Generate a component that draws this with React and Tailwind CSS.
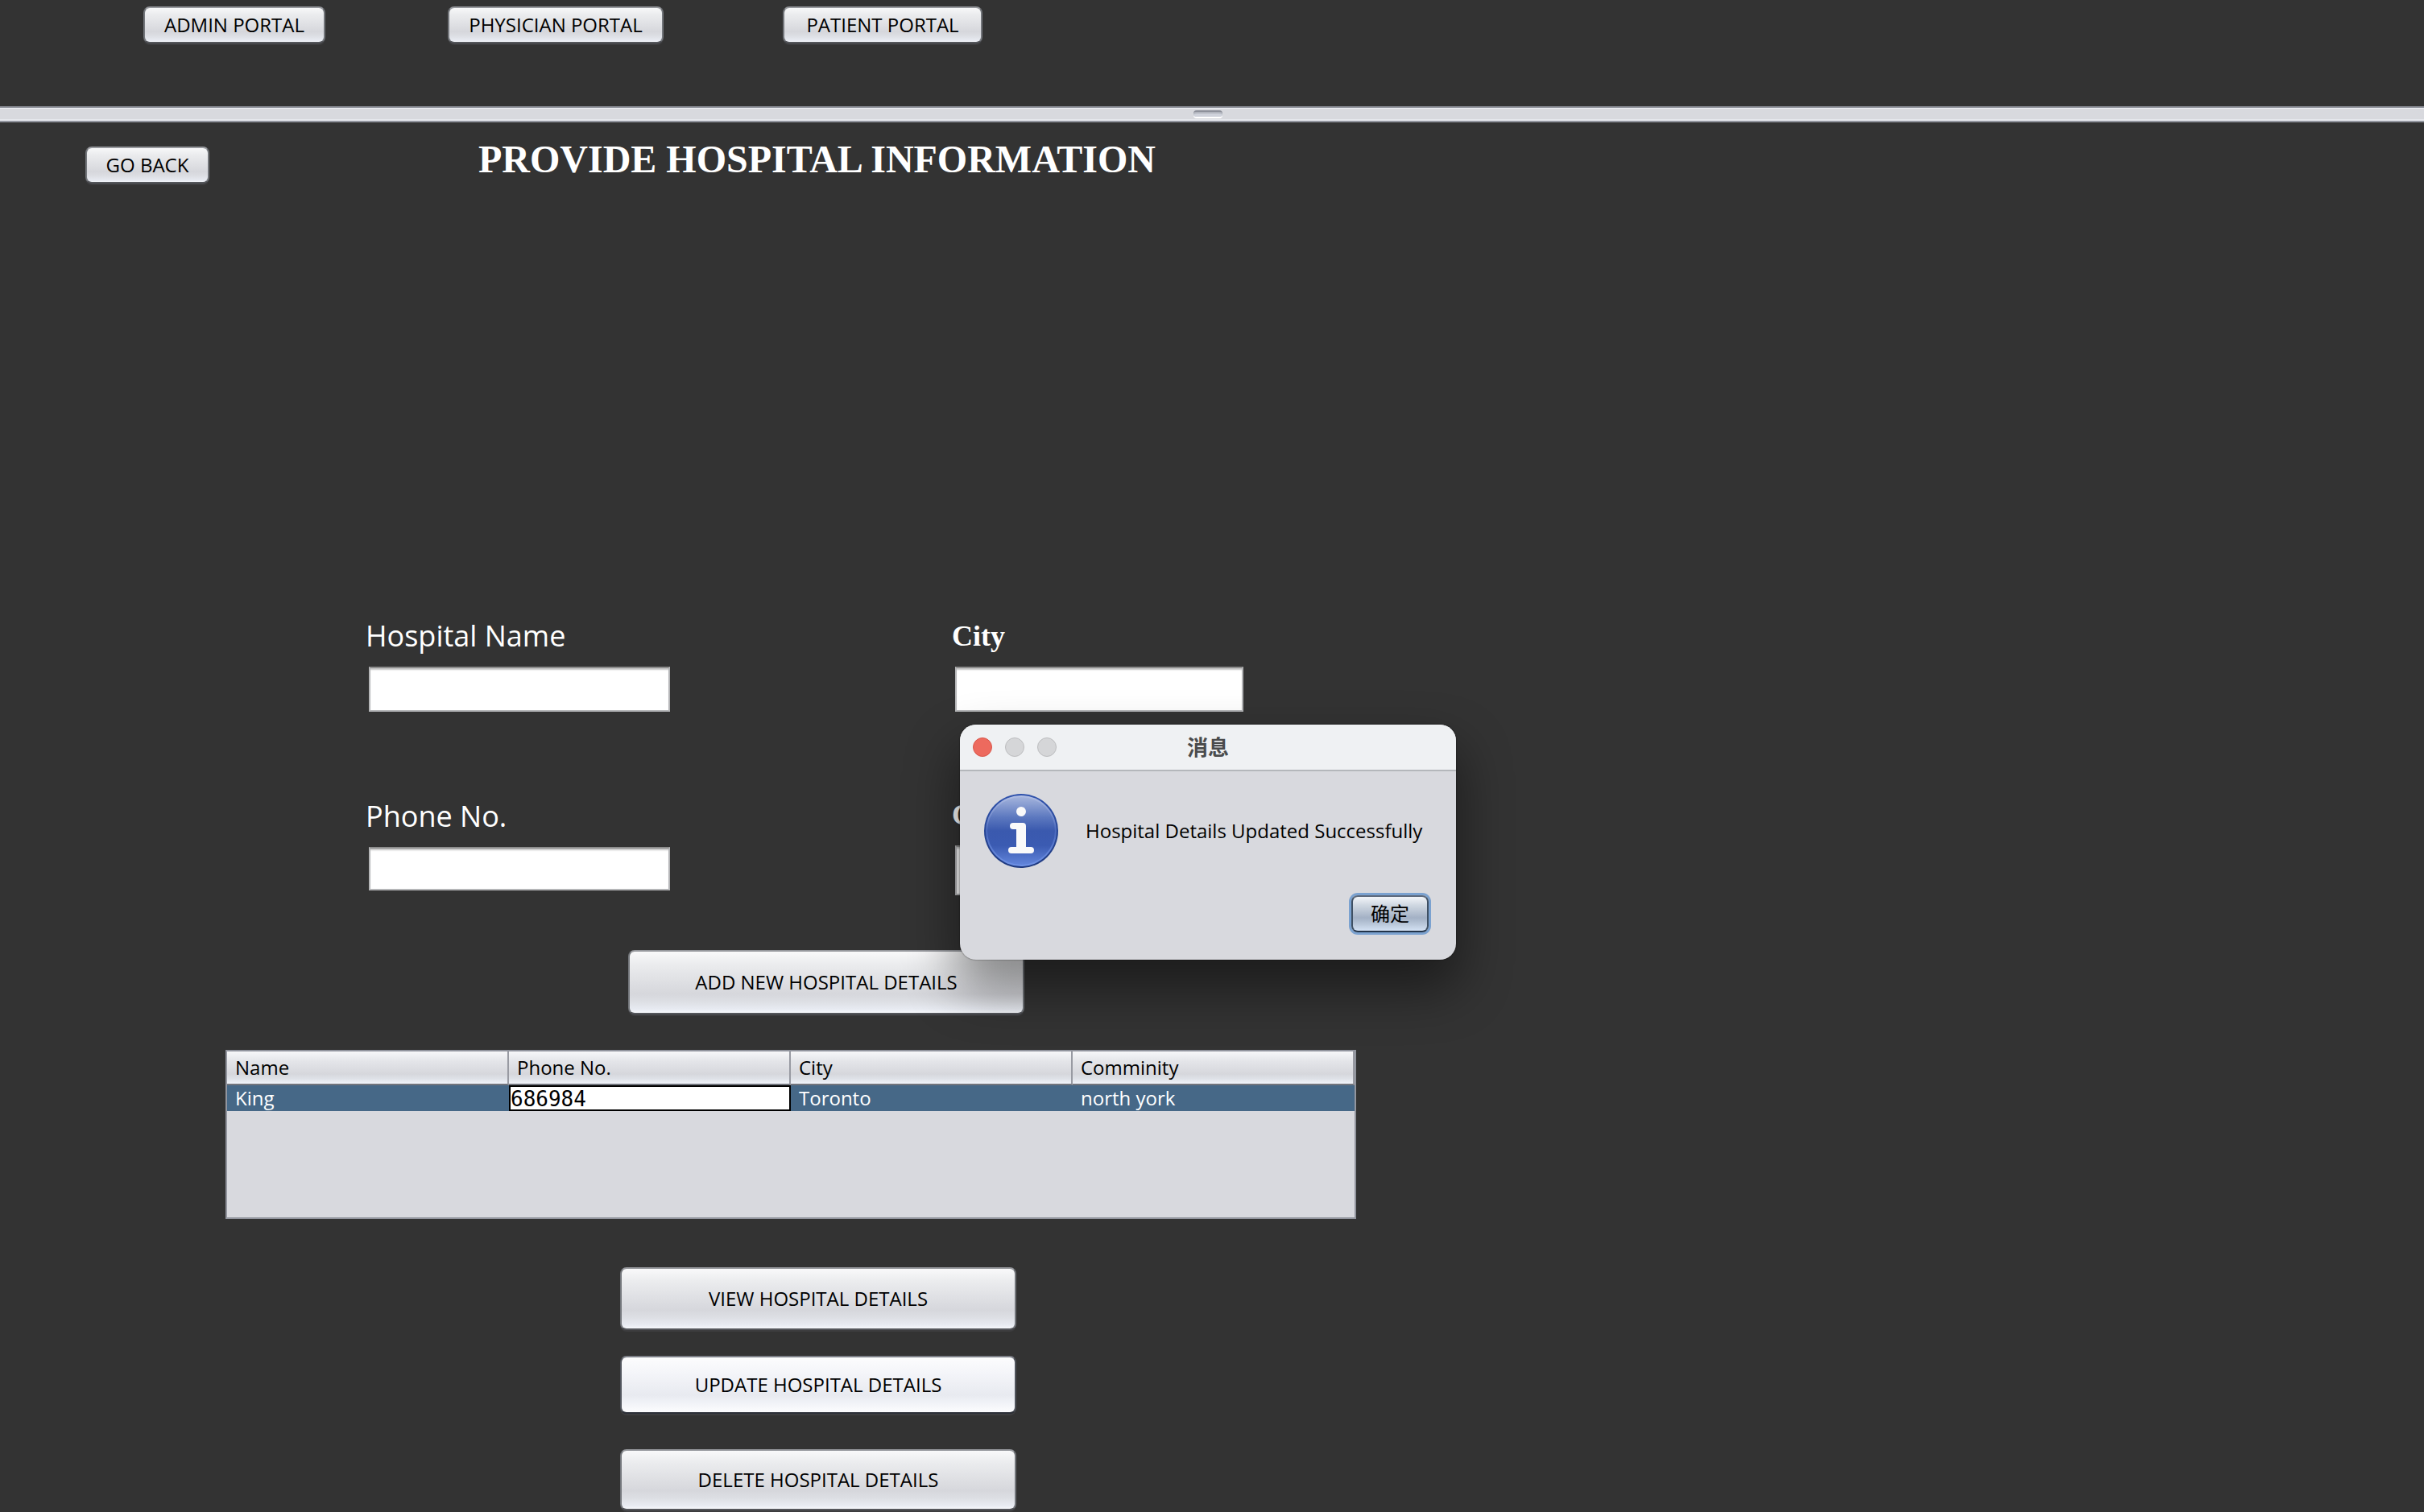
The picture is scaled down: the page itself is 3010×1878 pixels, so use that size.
import React from "react";

const sans = "font-['Open_Sans','Noto_Sans_CJK_SC',sans-serif]";
const serif = "font-['Liberation_Serif',serif]";

function NimbusButton({ children, className = "", hovered = false }) {
  const tone = hovered
    ? "bg-[linear-gradient(to_bottom,#fdfdfe_0%,#f4f5f9_30%,#e8eaf0_68%,#f0f2f7_80%,#fefeff_100%)] border-t-[#7d8088] border-x-[#50545c] border-b-[#2c3038]"
    : "bg-[linear-gradient(to_bottom,#fbfbfc_0%,#ebecee_22%,#d6d7dc_68%,#dddfe4_80%,#e8ebf2_92%,#fcfdff_100%)] border-t-[#96989d] border-x-[#73767b] border-b-[#54565b]";
  return (
    <button
      type="button"
      className={`block shrink-0 rounded-[8px] border-2 bg-origin-border text-center text-2xl font-medium leading-8 text-black shadow-[0_2px_0_#3d3d3f] ${tone} ${className}`}
    >
      {children}
    </button>
  );
}

function Field({ id, label, labelClass, inputClass, className = "" }) {
  return (
    <div className={`flex flex-col items-start ${className}`}>
      <label htmlFor={id} className={`text-4xl leading-[52px] text-white ${labelClass}`}>
        {label}
      </label>
      <input
        id={id}
        type="text"
        className={`ml-1 border-2 border-[#b5b6b8] border-t-[#8d8d8d] bg-white px-2 text-2xl text-black shadow-[inset_0_3px_2px_-1px_#c4c4c4] outline-none ${inputClass}`}
      />
    </div>
  );
}

function InfoIcon() {
  return (
    <svg viewBox="0 0 92 92" className="size-[92px] shrink-0" aria-hidden="true">
      <defs>
        <linearGradient id="infoFill" x1="0" y1="0" x2="0" y2="1">
          <stop offset="0" stopColor="#a3b3dc" />
          <stop offset="0.3" stopColor="#5c78bf" />
          <stop offset="0.5" stopColor="#3a59ae" />
          <stop offset="0.72" stopColor="#3b5bb2" />
          <stop offset="1" stopColor="#6184da" />
        </linearGradient>
        <linearGradient id="infoEdge" x1="0" y1="0" x2="0" y2="1">
          <stop offset="0" stopColor="#2f52ac" />
          <stop offset="1" stopColor="#1f3a80" />
        </linearGradient>
        <linearGradient id="infoGlow" x1="0" y1="0" x2="0" y2="1">
          <stop offset="0" stopColor="#b3c0e4" />
          <stop offset="0.5" stopColor="#4a69bd" />
          <stop offset="1" stopColor="#6f92e6" />
        </linearGradient>
      </defs>
      <circle cx="46" cy="46" r="46" fill="url(#infoEdge)" />
      <circle cx="46" cy="46" r="44" fill="url(#infoGlow)" />
      <circle cx="46" cy="46" r="42" fill="url(#infoFill)" />
      <g fill="#fafafa">
        <circle cx="46" cy="22" r="6" />
        <path d="M36 36h12a4 4 0 0 1 4 4v26h6a4 4 0 0 1 0 8H34a4 4 0 0 1 0-8h6V44h-4a4 4 0 0 1 0-8z" />
      </g>
    </svg>
  );
}

function MessageDialog() {
  return (
    <div
      role="dialog"
      aria-labelledby="dialog-title"
      className="absolute left-[1192px] top-[900px] w-[616px] overflow-hidden rounded-[20px] bg-[#d8d9de] shadow-[0_0_2px_rgba(0,0,0,0.6),0_32px_64px_4px_rgba(0,0,0,0.45)]"
    >
      <div className="grid h-[58px] grid-cols-[1fr_auto_1fr] items-center border-b-2 border-[#b4b7bb] bg-[#eff1f3] px-4">
        <div className="flex gap-4">
          <button type="button" aria-label="Close" className="size-6 rounded-full border border-[#d9564a] bg-[#ed6a5e]" />
          <button type="button" aria-label="Minimize" className="size-6 rounded-full border border-[#bcbdbf] bg-[#d5d6d8]" />
          <button type="button" aria-label="Zoom" className="size-6 rounded-full border border-[#bcbdbf] bg-[#d5d6d8]" />
        </div>
        <h2 id="dialog-title" className="text-[26px] font-bold leading-8 text-[#4a4b4c]">消息</h2>
      </div>
      <div className="flex items-center gap-[34px] pl-[30px] pt-7">
        <InfoIcon />
        <p className="whitespace-nowrap text-2xl font-medium text-black">Hospital Details Updated Successfully</p>
      </div>
      <div className="flex justify-end pb-[34px] pr-[34px] pt-[34px]">
        <button
          type="button"
          className="h-[46px] w-24 rounded-[8px] border-2 border-x-[#3f5063] border-t-[#5e6a7c] border-b-[#22344a] bg-[linear-gradient(to_bottom,#f2f5f9_0%,#cfd7e1_25%,#a3b1c5_62%,#b9c7d9_80%,#d4e2f4_100%)] text-2xl leading-8 text-black shadow-[0_0_0_3px_#7ba2d0]"
        >
          确定
        </button>
      </div>
    </div>
  );
}

const columns = ["Name", "Phone No.", "City", "Comminity"];

function HospitalTable() {
  return (
    <div className="ml-[280px] mt-11 h-[210px] w-[1404px] border-2 border-[#92959e] bg-[#d8d9de]">
      <table className="w-full table-fixed border-separate border-spacing-0 text-2xl font-medium">
        <thead>
          <tr>
            {columns.map((c) => (
              <th
                key={c}
                className="h-[42px] border-b-2 border-r-2 border-b-[#72757d] border-r-[#989aa2] bg-[linear-gradient(to_bottom,#f7f7f9_0%,#e4e5e9_30%,#d6d7dc_70%,#dfe2e8_85%,#f2f5fb_100%)] p-0 pl-2.5 text-left font-medium leading-8 text-black"
              >
                {c}
              </th>
            ))}
          </tr>
        </thead>
        <tbody>
          <tr className="bg-[#466887] text-white">
            <td className="h-8 p-0 pl-2.5 leading-8">King</td>
            <td className="h-8 p-0">
              <input
                aria-label="Phone No."
                defaultValue="686984"
                className="block h-8 w-full border-2 border-black bg-white pt-0.5 font-['DejaVu_Sans_Mono',monospace] text-[26px] leading-7 text-black outline-none"
              />
            </td>
            <td className="h-8 p-0 pl-2.5 leading-8">Toronto</td>
            <td className="h-8 p-0 pl-2.5 leading-8">north york</td>
          </tr>
        </tbody>
      </table>
    </div>
  );
}

export default function App() {
  return (
    <div className={`relative min-h-screen bg-[#333333] ${sans}`}>
      <nav className="flex h-[132px] items-start pl-[178px] pt-2">
        <NimbusButton className="h-[46px] w-[226px]">ADMIN PORTAL</NimbusButton>
        <NimbusButton className="ml-[152px] h-[46px] w-[268px]">PHYSICIAN PORTAL</NimbusButton>
        <NimbusButton className="ml-[148px] h-[46px] w-[248px]">PATIENT PORTAL</NimbusButton>
      </nav>

      <div
        role="separator"
        className="flex h-5 items-center border-y-2 border-[#92959e] bg-[#d8d9de] pl-[1482px] shadow-[inset_0_1px_0_#eceef2,inset_0_-2px_0_#e6e8ed]"
      >
        <div className="h-2.5 w-9 rounded-[4px] border-b-2 border-t-2 border-b-white border-t-[#8e919b] bg-[#cfd2db] shadow-[inset_0_2px_0_#b2b5be]" />
      </div>

      <main>
        <div className="flex items-start pl-[106px] pt-[30px]">
          <NimbusButton className="h-[46px] w-[154px]">GO BACK</NimbusButton>
          <h1 className={`-mt-[14px] ml-[334px] whitespace-nowrap text-5xl font-bold leading-[60px] text-white ${serif}`}>
            PROVIDE HOSPITAL INFORMATION
          </h1>
        </div>

        <form className="flex items-start gap-[350px] pl-[454px] pt-[536px]">
          <div className="w-[378px]">
            <Field id="name" label="Hospital Name" labelClass="font-medium" inputClass="mt-3 h-14 w-[374px]" />
            <Field id="phone" label="Phone No." className="mt-[104px]" labelClass="font-medium" inputClass="mt-3 h-[54px] w-[374px]" />
          </div>
          <div>
            <Field id="city" label="City" labelClass={`font-bold ${serif}`} inputClass="mt-3 h-14 w-[358px]" />
            <Field id="community" label="Comminity" className="mt-[102px]" labelClass={`font-bold ${serif}`} inputClass="mt-3 h-[62px] w-[358px]" />
          </div>
        </form>

        <NimbusButton className="ml-[780px] mt-[68px] h-20 w-[492px]">ADD NEW HOSPITAL DETAILS</NimbusButton>

        <HospitalTable />

        <div className="ml-[770px] mt-[60px]">
          <NimbusButton className="h-[78px] w-[492px]">VIEW HOSPITAL DETAILS</NimbusButton>
          <NimbusButton hovered className="mt-8 h-[72px] w-[492px]">UPDATE HOSPITAL DETAILS</NimbusButton>
          <NimbusButton className="mt-11 h-[76px] w-[492px]">DELETE HOSPITAL DETAILS</NimbusButton>
        </div>
      </main>

      <MessageDialog />
    </div>
  );
}
